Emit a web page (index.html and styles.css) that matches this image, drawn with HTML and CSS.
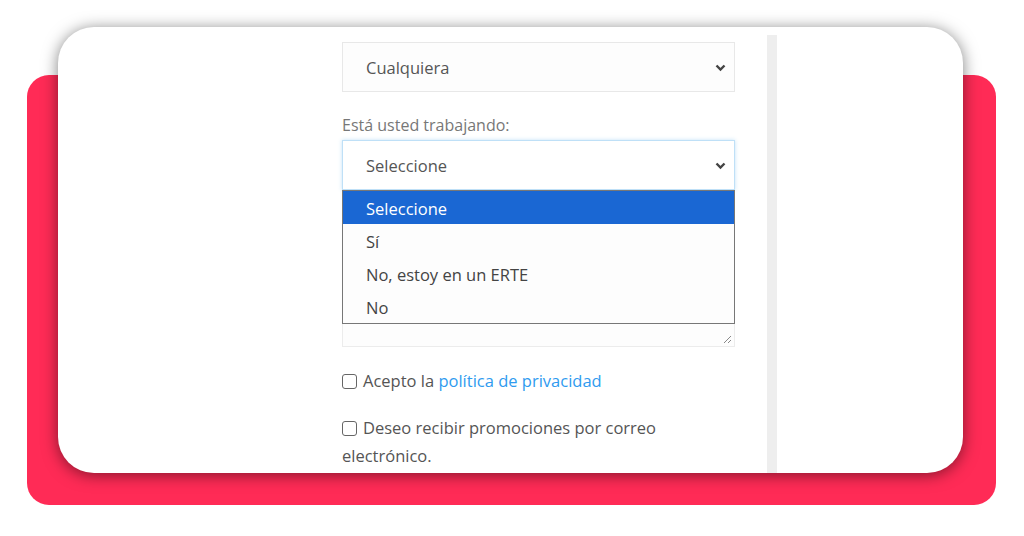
FILE: index.html
```html
<!DOCTYPE html>
<html lang="es">
<head>
  <meta charset="UTF-8">
  <meta name="viewport" content="width=device-width, initial-scale=1.0">
  <title>Formulario</title>
  <link rel="stylesheet" href="styles.css">
</head>
<body>
  <div class="stage">
    <div class="backdrop"></div>

    <div class="card">
      <form class="form">
        <div class="select">
          <span>Cualquiera</span>
          <svg class="chevron" width="11" height="8" viewBox="0 0 11 8"><polyline points="1.5,1.5 5.5,5.5 9.5,1.5" fill="none" stroke="#444" stroke-width="2.4"/></svg>
        </div>

        <label class="field-label">Está usted trabajando:</label>
        <div class="select-wrap">
          <div class="select focused">
            <span>Seleccione</span>
            <svg class="chevron" width="11" height="8" viewBox="0 0 11 8"><polyline points="1.5,1.5 5.5,5.5 9.5,1.5" fill="none" stroke="#444" stroke-width="2.4"/></svg>
          </div>
          <ul class="dropdown">
            <li class="option active">Seleccione</li>
            <li class="option">Sí</li>
            <li class="option">No, estoy en un ERTE</li>
            <li class="option">No</li>
          </ul>
        </div>

        <div class="textarea">
          <svg class="grip" width="9" height="9" viewBox="0 0 9 9"><path d="M8 1L1 8M8 5L5 8" stroke="#888" stroke-width="1"/></svg>
        </div>

        <p class="check-row">
          <span class="checkbox"></span>Acepto la <a href="#" class="link">política de privacidad</a>
        </p>
        <p class="check-row">
          <span class="checkbox"></span>Deseo recibir promociones por correo electrónico.
        </p>
      </form>

      <div class="scroll-strip"></div>
    </div>
  </div>
</body>
</html>
```

FILE: styles.css
```css
:root {
  --accent-red: #ff2b56;
  --text-color: #555;
  --option-blue: #1a67d3;
  --link-color: #2f9bef;
}

body {
  margin: 0;
  width: 1024px;
  height: 536px;
  overflow: hidden;
  background: #fff;
  font-family: 'Open Sans', 'Noto Sans', sans-serif;
  color: var(--text-color);
}

.stage {
  position: relative;
  height: 536px;
  padding-top: 27px;
  box-sizing: border-box;
}

.backdrop {
  position: absolute;
  left: 27px;
  top: 75px;
  width: 969px;
  height: 430px;
  border-radius: 22px;
  background: var(--accent-red);
}

.card {
  position: relative;
  margin-left: 58px;
  width: 905px;
  height: 446px;
  border-radius: 36px;
  background: #fff;
  overflow: hidden;
  box-shadow: 0 2px 16px rgba(0, 0, 0, 0.5);
  display: flex;
}

.form {
  margin-left: 284px;
  width: 393px;
  padding-top: 15px;
}

.select {
  height: 50px;
  box-sizing: border-box;
  border: 1px solid #e8e8e8;
  background: #fdfdfd;
  display: flex;
  align-items: center;
  justify-content: space-between;
  padding: 0 8px 0 23px;
  font-size: 16.5px;
  color: #555;
}

.select span {
  margin-top: 1px;
}

.select.focused {
  border-color: #bfe0f7;
  box-shadow: 0 0 4px rgba(120, 190, 240, 0.45);
  background: #fff;
}

.chevron {
  margin-top: 1px;
}

.field-label {
  display: block;
  margin-top: 22px;
  margin-bottom: 3px;
  font-size: 16px;
  line-height: 23px;
  color: #777;
}

.select-wrap {
  position: relative;
}

.dropdown {
  position: absolute;
  top: 100%;
  left: 0;
  right: 0;
  z-index: 2;
  margin: 0;
  padding: 0;
  list-style: none;
  background: #fdfdfd;
  border: 1px solid #777;
}

.option {
  height: 33px;
  line-height: 35px;
  padding-left: 23px;
  font-size: 16.5px;
  color: #444;
}

.option.active {
  background: var(--option-blue);
  color: #fff;
}

.textarea {
  position: relative;
  margin-top: 47px;
  height: 110px;
  box-sizing: border-box;
  border: 1px solid #ececec;
  background: #fdfdfd;
}

.grip {
  position: absolute;
  right: 2px;
  bottom: 2px;
}

.check-row {
  margin: 20px 0 0;
  font-size: 16.5px;
  line-height: 28px;
  color: #555;
}

.check-row + .check-row {
  margin-top: 19px;
}

.checkbox {
  display: inline-block;
  width: 13px;
  height: 13px;
  border: 1.5px solid #666;
  border-radius: 3px;
  margin-right: 6px;
  vertical-align: -2px;
}

.link {
  color: var(--link-color);
  text-decoration: none;
}

.scroll-strip {
  margin-left: 32px;
  margin-top: 8px;
  width: 10px;
  background: #eee;
}
```
